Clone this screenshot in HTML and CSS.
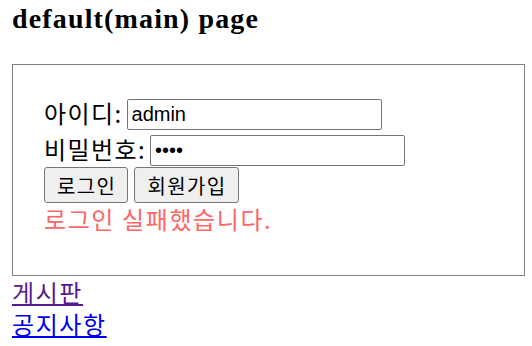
FILE: index.html
```html
<!DOCTYPE html>
<html>
<head>
  <meta charset="utf-8"/>
  <title>default(main) page</title>
  <link rel="stylesheet" href="styles.css">
</head>
<body>

<h1 class="title">default(main) page</h1>

<form class="loginBox">
  <div class="row">
    <label for="userId">아이디:</label>
    <input type="text" id="userId" name="userId" value="admin"/>
  </div>
  <div class="row">
    <label for="userPw">비밀번호:</label>
    <input type="password" id="userPw" name="userPw" value="1234"/>
  </div>
  <div class="buttons">
    <button type="submit">로그인</button>
    <button type="button">회원가입</button>
  </div>
  <div class="error">로그인 실패했습니다.</div>
</form>

<div class="menu">
  <a href="#board" class="visited">게시판</a>
  <a href="#notice">공지사항</a>
</div>

</body>
</html>
```

FILE: styles.css
```css
body {
  margin: 0 0 0 12px;
  font-family: "Noto Sans CJK KR", "Liberation Sans", sans-serif;
  font-size: 24px;
  letter-spacing: 1.6px;
  color: #000;
  background-color: #fff;
}
.title {
  margin: 3px 0 29px;
  font-family: "Liberation Serif", serif;
  font-size: 28px;
  line-height: 32px;
  font-weight: bold;
  letter-spacing: 1.15px;
}
.loginBox {
  width: 513px;
  box-sizing: border-box;
  margin: 0;
  border: 1px solid #808080;
  padding: 30px 31px 40px;
}
.row {
  height: 36px;
  display: flex;
  align-items: flex-end;
  gap: 4px;
}
.row label {
  line-height: 36px;
  letter-spacing: 1.4px;
}
.row input {
  width: 255px;
  height: 31px;
  box-sizing: border-box;
  margin: 0 0 1px;
  padding: 1px 4px;
  border: 1px solid #767676;
  border-radius: 2px;
  font-family: "Liberation Sans", sans-serif;
  font-size: 20px;
  letter-spacing: 0;
}
.buttons {
  height: 36px;
  display: flex;
  gap: 6px;
}
.buttons button {
  height: 36px;
  margin: 0;
  padding: 0 11px 0 12px;
  border: 1px solid #767676;
  border-radius: 3px;
  background-color: #efefef;
  font-family: "Noto Sans CJK KR", sans-serif;
  font-size: 20px;
  letter-spacing: 1.4px;
  color: #000;
}
.error {
  line-height: 32px;
  color: #ff6666;
}
.menu {
  display: flex;
  flex-direction: column;
  align-items: flex-start;
  line-height: 32px;
}
.menu a {
  color: #0000ee;
}
.menu a.visited {
  color: #551a8b;
}
```
